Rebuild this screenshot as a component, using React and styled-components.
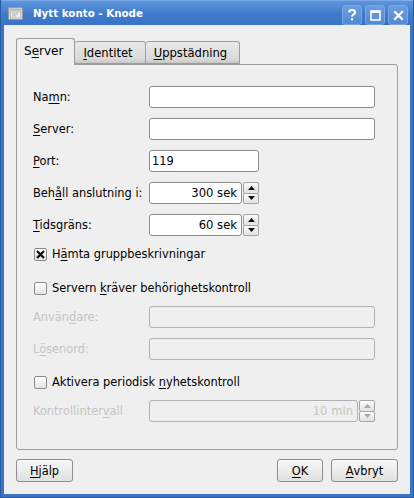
import React from 'react';
import styled, {createGlobalStyle} from 'styled-components';

const GlobalStyle = createGlobalStyle`
    body {
        margin: 0;
        background: #ffffff;
        font-family: "DejaVu Sans", Verdana, sans-serif;
    }
`;

// underline the mnemonic letter of a label
const Mn = ({text, at}) => {
    if (at < 0) return text;
    return (
        <>
            {text.slice(0, at)}
            <U>{text[at]}</U>
            {text.slice(at + 1)}
        </>
    );
};

const TitleIcon = () => (
    <svg width="15" height="13" viewBox="0 0 15 13">
        <rect x="0.5" y="0.5" width="14" height="12" rx="1" fill="#d8d8d8" stroke="#9a9a9a"/>
        <rect x="1.5" y="1.5" width="12" height="2" fill="#b8b8b8"/>
        <rect x="2.5" y="5" width="10" height="6" fill="#ececec" stroke="#a8a8a8" strokeWidth="0.6"/>
        <rect x="4" y="6.5" width="6" height="1" fill="#b0b0b0"/>
        <rect x="4" y="8.5" width="4" height="1" fill="#b0b0b0"/>
    </svg>
);

const HelpGlyph = () => (
    <svg width="10" height="12" viewBox="0 0 10 12">
        <path d="M2 3.6 C2 1.8 3.3 1 5 1 C6.8 1 8 2 8 3.5 C8 5 6.8 5.4 5.9 6 C5.2 6.5 5 6.9 5 7.8" fill="none" stroke="#fff" strokeWidth="2.1"/>
        <rect x="3.9" y="9.2" width="2.2" height="2.3" fill="#fff"/>
    </svg>
);

const MaxGlyph = () => (
    <svg width="11" height="11" viewBox="0 0 11 11">
        <rect x="1" y="1" width="9" height="9" fill="none" stroke="#fff" strokeWidth="1.6"/>
        <rect x="1" y="1" width="9" height="2" fill="#fff"/>
    </svg>
);

const CloseGlyph = () => (
    <svg width="11" height="11" viewBox="0 0 11 11">
        <path d="M1.2 1.2 L9.8 9.8 M9.8 1.2 L1.2 9.8" stroke="#fff" strokeWidth="2.2"/>
    </svg>
);

const Arrow = ({up, disabled}) => (
    <svg width="7" height="4" viewBox="0 0 7 4">
        <path d={up ? 'M0 4 L3.5 0 L7 4 Z' : 'M0 0 L3.5 4 L7 0 Z'} fill={disabled ? '#a8a8a8' : '#111'}/>
    </svg>
);

const CheckMark = () => (
    <svg width="9" height="9" viewBox="0 0 9 9">
        <path d="M1 1 L8 8 M8 1 L1 8" stroke="#111" strokeWidth="2.3"/>
    </svg>
);

const SpinBox = ({value, width, disabled}) => (
    <SpinWrap $width={width}>
        <SpinField $disabled={disabled}>{value}</SpinField>
        <SpinButtons>
            <SpinButton><Arrow up disabled={disabled}/></SpinButton>
            <SpinButton><Arrow disabled={disabled}/></SpinButton>
        </SpinButtons>
    </SpinWrap>
);

const Check = ({checked, label, at, top}) => (
    <CheckRow $top={top}>
        <Box>{checked && <CheckMark/>}</Box>
        <span><Mn text={label} at={at}/></span>
    </CheckRow>
);

const App = () => {
    return (
        <Window>
            <GlobalStyle/>
            <TitleBar>
                <TitleIcon/>
                <Title>Nytt konto - Knode</Title>
                <TitleButtons>
                    <TitleButton><HelpGlyph/></TitleButton>
                    <TitleButton><MaxGlyph/></TitleButton>
                    <TitleButton><CloseGlyph/></TitleButton>
                </TitleButtons>
            </TitleBar>

            <Client>
                <TabBar>
                    <Tab $active><Mn text="Server" at={1}/></Tab>
                    <Tab><Mn text="Identitet" at={0}/></Tab>
                    <Tab><Mn text="Uppstädning" at={0}/></Tab>
                </TabBar>

                <Panel>
                    <Row $top={0}>
                        <Label><Mn text="Namn:" at={2}/></Label>
                        <Input/>
                    </Row>
                    <Row>
                        <Label><Mn text="Server:" at={0}/></Label>
                        <Input/>
                    </Row>
                    <Row>
                        <Label><Mn text="Port:" at={0}/></Label>
                        <Input $width={110}>119</Input>
                    </Row>
                    <Row>
                        <Label><Mn text="Behåll anslutning i:" at={3}/></Label>
                        <SpinBox value="300 sek" width={110}/>
                    </Row>
                    <Row>
                        <Label><Mn text="Tidsgräns:" at={0}/></Label>
                        <SpinBox value="60 sek" width={110}/>
                    </Row>

                    <Check checked label="Hämta gruppbeskrivningar" at={1} top={1}/>
                    <Check label="Servern kräver behörighetskontroll" at={8} top={0}/>

                    <Row $top={1}>
                        <Label $disabled><Mn text="Användare:" at={5}/></Label>
                        <Input $disabled/>
                    </Row>
                    <Row>
                        <Label $disabled><Mn text="Lösenord:" at={1}/></Label>
                        <Input $disabled/>
                    </Row>

                    <Check label="Aktivera periodisk nyhetskontroll" at={19} top={5}/>

                    <Row $top={1}>
                        <Label $disabled><Mn text="Kontrollintervall" at={13}/></Label>
                        <SpinBox value="10 min" disabled/>
                    </Row>
                </Panel>

                <Footer>
                    <Button $width={57}><Mn text="Hjälp" at={0}/></Button>
                    <FooterRight>
                        <Button $width={46}><Mn text="OK" at={0}/></Button>
                        <Button $width={67}><Mn text="Avbryt" at={0}/></Button>
                    </FooterRight>
                </Footer>
            </Client>
        </Window>
    );
};

export default App;


const Window = styled.div`
    width: 414px;
    height: 498px;
    box-sizing: border-box;
    display: flex;
    flex-direction: column;
    background: #3b74c5;
    border: 1px solid #2a5aa0;
    border-top: none;
`;

const TitleBar = styled.div`
    height: 25px;
    flex-shrink: 0;
    display: flex;
    align-items: center;
    padding: 0 5px 0 7px;
    background: linear-gradient(#5f96dc, #3f7acb 55%, #3873c6);
    border-top: 1px solid #7aaae8;
    box-sizing: border-box;
`;

const Title = styled.span`
    margin-left: 10px;
    color: #ffffff;
    font-weight: bold;
    font-size: 10.3px;
    flex: 1;
`;

const TitleButtons = styled.div`
    display: flex;
    gap: 3px;
    margin-top: 4px;
`;

const TitleButton = styled.div`
    width: 20px;
    height: 20px;
    box-sizing: border-box;
    border: 1px solid #79a7e2;
    border-radius: 3px;
    background: linear-gradient(#6b9ee0, #5389d4);
    display: flex;
    align-items: center;
    justify-content: center;
`;

const Client = styled.div`
    flex: 1;
    margin: 0 3px 4px;
    background: #efefef;
    padding: 13px 12px 12px;
    display: flex;
    flex-direction: column;
    font-size: 11.4px;
    color: #000;
`;

const U = styled.span`
    text-decoration: underline;
    text-underline-offset: 2px;
`;

const TabBar = styled.div`
    height: 26px;
    display: flex;
    align-items: flex-end;
    position: relative;
    z-index: 1;
`;

const Tab = styled.div`
    box-sizing: border-box;
    height: ${p => p.$active ? '27px' : '23px'};
    margin-bottom: ${p => p.$active ? '-1px' : '0'};
    padding: ${p => p.$active ? '0 11px 2px 7px' : '0 12px 0 8px'};
    display: flex;
    align-items: center;
    font-size: ${p => p.$active ? '12px' : '11.6px'};
    border: 1px solid #9c9c9c;
    border-bottom: ${p => p.$active ? 'none' : '1px solid #9c9c9c'};
    border-left: ${p => p.$active ? '1px solid #9c9c9c' : 'none'};
    border-radius: 3px 3px 0 0;
    background: ${p => p.$active
        ? '#efefef'
        : 'linear-gradient(#e9e9e9, #dadada 80%, #c8c8c8)'};
`;

const Panel = styled.div`
    height: 386px;
    box-sizing: border-box;
    border: 1px solid #9c9c9c;
    border-radius: 0 3px 3px 3px;
    padding: 21px 22px 0 16px;
    display: flex;
    flex-direction: column;
`;

const Row = styled.div`
    display: flex;
    align-items: center;
    height: 22px;
    margin-top: ${p => (p.$top ?? 10)}px;
    flex-shrink: 0;
`;

const Label = styled.div`
    width: 116px;
    flex-shrink: 0;
    color: ${p => p.$disabled ? '#c4c4c4' : '#000'};
`;

const Input = styled.div`
    box-sizing: border-box;
    height: 22px;
    ${p => p.$width ? `width: ${p.$width}px;` : 'flex: 1;'}
    border: 1px solid ${p => p.$disabled ? '#b0b0b0' : '#8c8c8c'};
    border-radius: 3px;
    background: ${p => p.$disabled ? '#efefef' : '#ffffff'};
    padding: 0 2px;
    display: flex;
    align-items: center;
    font-size: 11.4px;
`;

const SpinWrap = styled.div`
    display: flex;
    height: 22px;
    ${p => p.$width ? `width: ${p.$width}px;` : 'flex: 1;'}
    gap: 1px;
`;

const SpinField = styled.div`
    flex: 1;
    box-sizing: border-box;
    border: 1px solid ${p => p.$disabled ? '#b0b0b0' : '#8c8c8c'};
    border-radius: 3px;
    background: ${p => p.$disabled ? '#efefef' : '#ffffff'};
    color: ${p => p.$disabled ? '#c4c4c4' : '#000'};
    display: flex;
    align-items: center;
    justify-content: flex-end;
    padding-right: 4px;
    font-size: 11.6px;
`;

const SpinButtons = styled.div`
    width: 16px;
    display: flex;
    flex-direction: column;
`;

const SpinButton = styled.div`
    flex: 1;
    box-sizing: border-box;
    border: 1px solid #a4a4a4;
    border-radius: 2px;
    background: linear-gradient(#fbfbfb, #e2e2e2);
    display: flex;
    align-items: center;
    justify-content: center;
    & + & {
        margin-top: -1px;
    }
`;

const CheckRow = styled.div`
    display: flex;
    align-items: center;
    height: 34px;
    margin-top: ${p => p.$top}px;
    flex-shrink: 0;
    gap: 5px;
`;

const Box = styled.div`
    width: 13px;
    height: 13px;
    box-sizing: border-box;
    border: 1px solid #8a8a8a;
    border-radius: 2px;
    background: linear-gradient(#ffffff, #e4e4e4);
    display: flex;
    align-items: center;
    justify-content: center;
    margin-left: 1px;
`;

const Footer = styled.div`
    margin-top: 9px;
    display: flex;
    justify-content: space-between;
`;

const FooterRight = styled.div`
    display: flex;
    gap: 8px;
`;

const Button = styled.div`
    width: ${p => p.$width}px;
    height: 23px;
    box-sizing: border-box;
    border: 1px solid #8e8e8e;
    border-radius: 3px;
    background: linear-gradient(#f8f8f8, #e0e0e0);
    display: flex;
    align-items: center;
    justify-content: center;
`;
